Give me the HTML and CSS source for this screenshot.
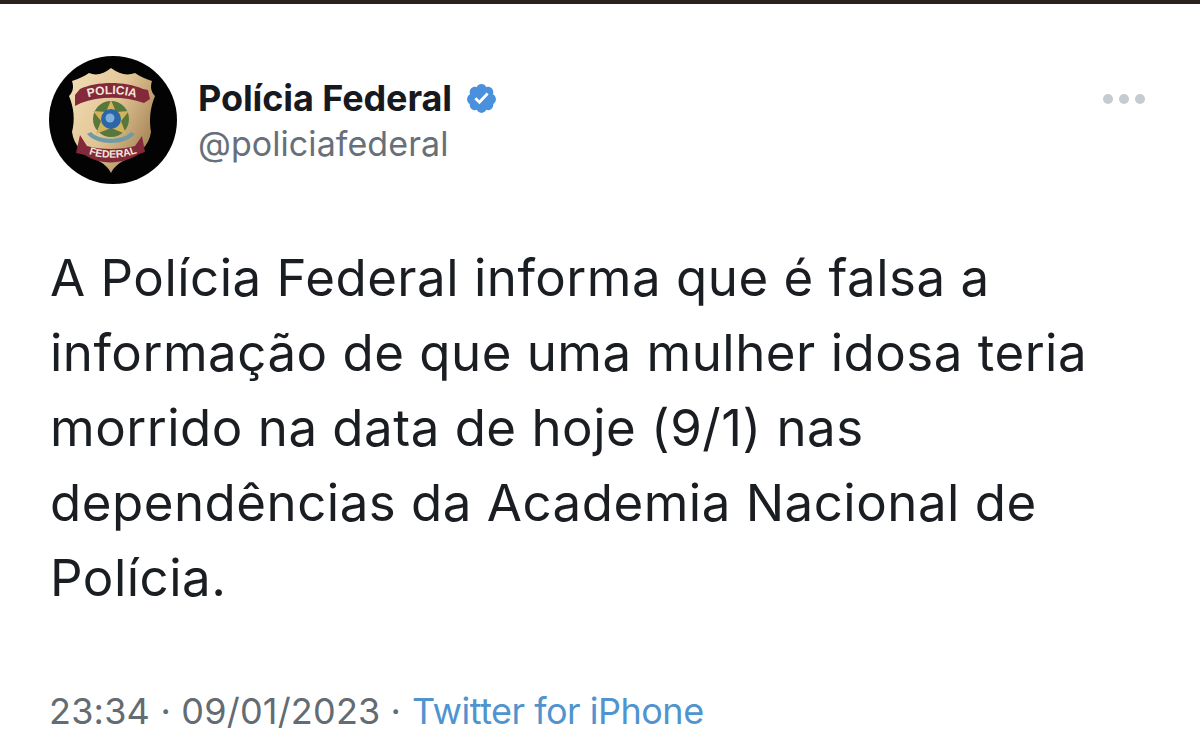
FILE: index.html
```html
<!DOCTYPE html>
<html lang="pt-BR">
<head>
<meta charset="utf-8">
<title>Polícia Federal</title>
<link rel="stylesheet" href="styles.css">
</head>
<body>
<div class="topbar"></div>
<article class="tweet">
  <header class="head">
    <svg class="avatar" viewBox="0 0 128 128" aria-label="Polícia Federal">
      <defs>
        <linearGradient id="gold" x1="0" y1="0" x2="1" y2="0.6">
          <stop offset="0" stop-color="#f2e0b8"/>
          <stop offset="0.55" stop-color="#e2c596"/>
          <stop offset="1" stop-color="#a88757"/>
        </linearGradient>
        <path id="arc-top" d="M34 43 Q62 33 92 43"/>
        <path id="arc-bottom" d="M37 97 Q62 107 91 96"/>
      </defs>
      <circle cx="64" cy="64" r="64" fill="#040303"/>
      <path d="M62 12 C70 18 78 20 86 17 C92 21 97 23 103 25 C101 31 102 36 106 40 C101 52 100 64 102 76 C100 90 90 98 76 104 C70 107 65 111 62 117 C59 111 54 107 48 104 C34 98 25 90 23 76 C26 64 25 52 20 40 C24 36 25 31 23 25 C29 23 34 21 40 17 C47 20 55 18 62 12 Z" fill="url(#gold)"/>
      <path d="M31 33 C48 25 76 25 94 33 L99 34 L101 43 L95 47 C76 40 50 40 32 47 L26 50 L26 39 Z" fill="#84293a"/>
      <path d="M31 79 L38 90 C52 94 72 94 86 90 L93 80 L96 96 L90 98 C74 109 50 109 36 99 L27 97 Z" fill="#84293a"/>
      <text class="badge-top"><textPath href="#arc-top" startOffset="50%" text-anchor="middle">POLICIA</textPath></text>
      <text class="badge-bottom"><textPath href="#arc-bottom" startOffset="50%" text-anchor="middle">FEDERAL</textPath></text>
      <circle cx="62" cy="63" r="18" fill="#58773a"/>
      <path d="M62 44 L67 56 L80 55 L72 65 L77 78 L62 72 L47 78 L52 65 L44 55 L57 56 Z" fill="#d3b45c"/>
      <circle cx="62" cy="63" r="10" fill="#2a66a8"/>
      <circle cx="61" cy="62" r="4.5" fill="#7fb0dc"/>
      <path d="M42 76 C50 85 74 85 82 76 L86 78 C76 90 48 90 38 78 Z" fill="#6f9aa6"/>
    </svg>
    <div class="names">
      <div class="name-row">
        <span class="name">Polícia Federal</span>
        <svg class="verified" viewBox="0 0 24 24" aria-label="Verificado">
          <path fill="#4a90dc" d="M22.5 12.5c0-1.58-.875-2.95-2.148-3.6.154-.435.238-.905.238-1.4 0-2.21-1.71-3.998-3.818-3.998-.47 0-.92.084-1.336.25C14.818 2.415 13.51 1.5 12 1.5s-2.816.917-3.437 2.25c-.415-.165-.866-.25-1.336-.25-2.11 0-3.818 1.79-3.818 4 0 .494.083.964.237 1.4-1.272.65-2.147 2.018-2.147 3.6 0 1.495.782 2.798 1.942 3.486-.02.17-.032.34-.032.514 0 2.21 1.708 4 3.818 4 .47 0 .92-.086 1.335-.25.62 1.334 1.926 2.25 3.437 2.25 1.512 0 2.818-.916 3.437-2.25.415.163.865.248 1.336.248 2.11 0 3.818-1.79 3.818-4 0-.174-.012-.344-.033-.513 1.158-.687 1.943-1.99 1.943-3.484z"/>
          <path fill="#fff" d="M10.54 16.2 6.8 12.46l1.42-1.42 2.2 2.2 5.3-5.6 1.46 1.38z"/>
        </svg>
      </div>
      <div class="handle">@policiafederal</div>
    </div>
    <div class="more" aria-label="Mais"><i></i><i></i><i></i></div>
  </header>
  <p class="body">A Polícia Federal informa que é falsa a<br>informação de que uma mulher idosa teria<br>morrido na data de hoje (9/1) nas<br>dependências da Academia Nacional de<br>Polícia.</p>
  <footer class="meta"><span class="stamp">23:34 · 09/01/2023</span> · <span class="source">Twitter for iPhone</span></footer>
</article>
</body>
</html>
```
FILE: styles.css
```css
html, body {
  margin: 0;
  padding: 0;
  background: #fff;
  height: 100%;
  overflow: hidden;
}
body {
  font-family: Inter, "Liberation Sans", sans-serif;
  color: #16191d;
}
.topbar {
  height: 4px;
  background: #2a211d;
}
.tweet {
  padding: 52px 55px 0 49px;
}
.head {
  display: flex;
  align-items: flex-start;
}
.avatar {
  width: 128px;
  height: 128px;
  flex: none;
}
.badge-top, .badge-bottom {
  font-family: "Liberation Sans", sans-serif;
  font-weight: 700;
  fill: #f3e7d8;
}
.badge-top { font-size: 12px; }
.badge-bottom { font-size: 10.5px; }
.names {
  margin-left: 21px;
  padding-top: 20px;
  flex: 1;
}
.name-row {
  display: flex;
  align-items: center;
  gap: 13px;
  height: 44px;
}
.name {
  font-size: 36px;
  font-weight: 700;
  letter-spacing: -.1px;
}
.verified {
  width: 33px;
  height: 33px;
}
.handle {
  font-size: 34px;
  letter-spacing: .07px;
  line-height: 44px;
  color: #67707a;
  margin-top: 2px;
}
.more {
  display: flex;
  gap: 6px;
  padding-top: 38px;
}
.more i {
  width: 10px;
  height: 10px;
  border-radius: 50%;
  background: #c5cbd1;
}
.body {
  margin: 56px 0 0 1px;
  font-size: 51px;
  letter-spacing: .5px;
  line-height: 75px;
  color: #1a1d21;
}
.meta {
  margin-top: 74px;
  font-size: 36px;
  line-height: 44px;
  color: #636b73;
}
.stamp {
  letter-spacing: .2px;
}
.source {
  margin-left: 1px;
  letter-spacing: -.5px;
  color: #4f94cf;
}
```
